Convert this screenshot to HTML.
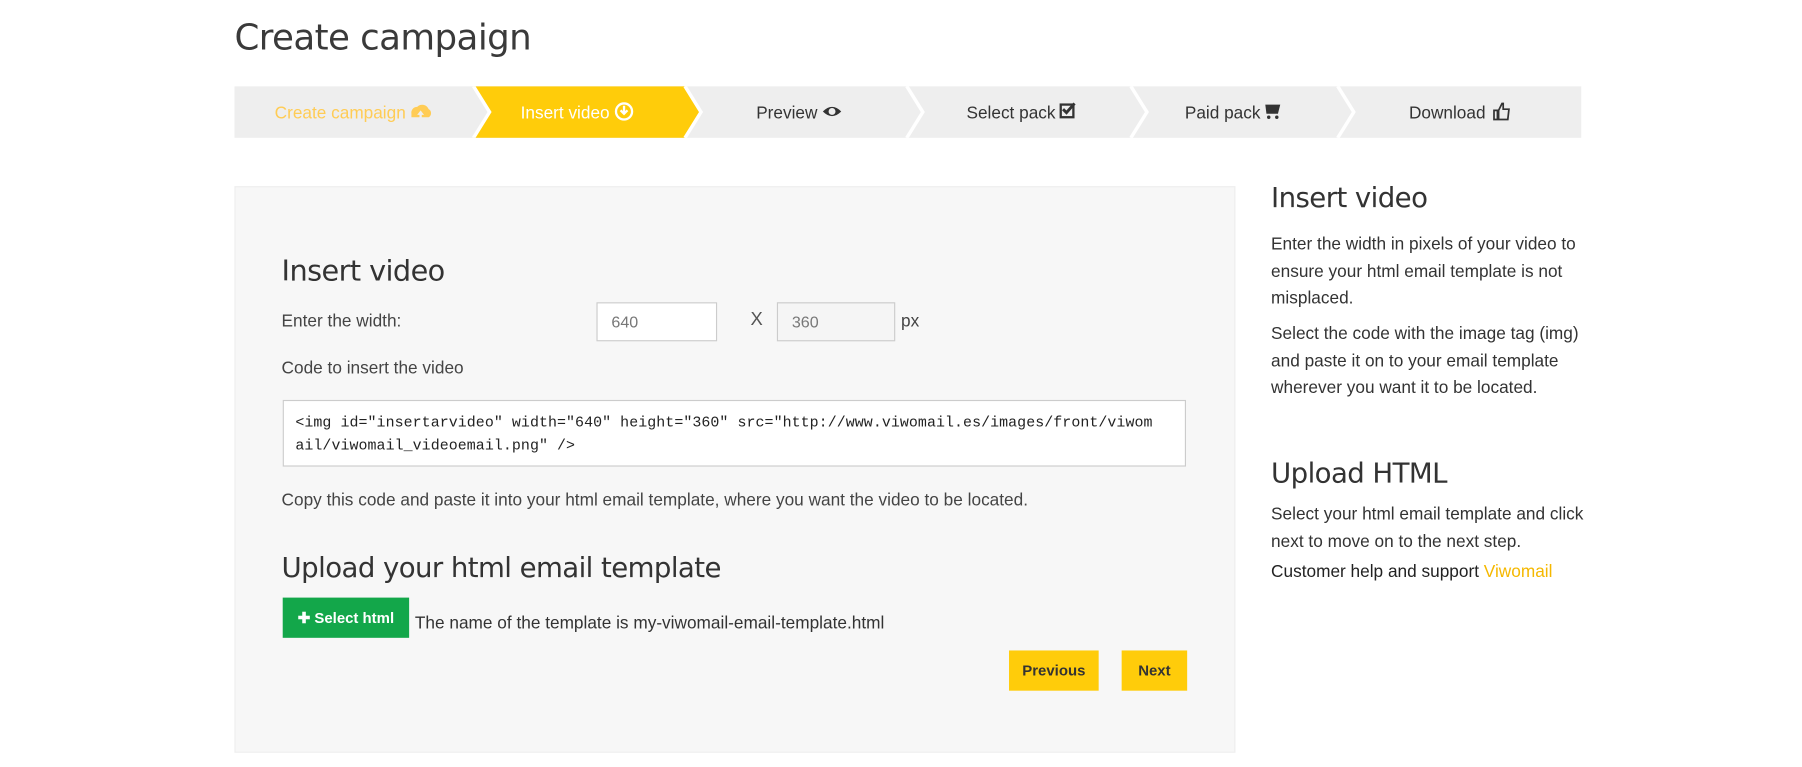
<!DOCTYPE html>
<html><head><meta charset="utf-8"><style>
body{margin:0;width:1802px;height:766px;background:#fff;font-family:"Liberation Sans",sans-serif;color:#333;position:relative;overflow:hidden}
#w{position:absolute;left:0;top:0;width:1568px;height:667px;transform:scale(1.14923);transform-origin:0 0}
.a{position:absolute;white-space:nowrap}
h1,h2,h3{margin:0;font-weight:normal;font-family:"DejaVu Sans","Liberation Sans",sans-serif;letter-spacing:-0.5px}
.s{font-size:15px;color:#444}
input{position:absolute;border:1px solid #ccc;background:#fff;font-size:14px;color:#777;padding:0 12px;box-sizing:border-box;height:34px;font-family:"Liberation Sans",sans-serif}
.btn{position:absolute;background:#ffcc0a;color:#333;font-size:13px;font-weight:bold;text-align:center;line-height:35px;height:35px}
</style></head><body><div id="w">
<h1 class="a" style="left:204px;top:15px;font-size:31px;color:#3a3a3a">Create campaign</h1>
<svg class="a" style="left:204px;top:75px" width="1172" height="45">
<rect width="1172" height="45" fill="#eeeeee"/>
<polygon points="208,0 392,0 406,22.5 392,45 208,45 222,22.5" fill="#ffcc0a"/>
<g fill="none" stroke="#fff" stroke-width="3">
<polyline points="208,0 222,22.5 208,45"/>
<polyline points="392,0 406,22.5 392,45"/>
<polyline points="585,0 599,22.5 585,45"/>
<polyline points="780,0 794,22.5 780,45"/>
<polyline points="960,0 974,22.5 960,45"/>
</g>
<g font-family="Liberation Sans" font-size="15">
<text x="35" y="28" fill="#ffcc55">Create campaign</text>
<text x="249" y="28" fill="#fff">Insert video</text>
<text x="454" y="28" fill="#333">Preview</text>
<text x="637" y="28" fill="#333">Select pack</text>
<text x="827" y="28" fill="#333">Paid pack</text>
<text x="1022" y="28" fill="#333">Download</text>
</g>
<path d="M154 24a5 5 0 0 1 5-6 6 6 0 0 1 10 2 4 4 0 0 1 0 7h-15z" fill="#ffcc55"/><path d="M162 21l-3 4h2v5h2v-5h2z" fill="#eee"/>
<circle cx="339" cy="22" r="7" fill="none" stroke="#fff" stroke-width="2"/><path d="M339 17v7M336 21l3 3 3-3" stroke="#fff" stroke-width="2" fill="none"/>
<path d="M512 22q8-8 16 0q-8 8-16 0z" fill="#333"/><circle cx="520" cy="22" r="3" fill="#eee"/>
<rect x="719" y="16" width="11" height="11" fill="none" stroke="#333" stroke-width="2"/><path d="M721 20l3 3 7-8" stroke="#333" stroke-width="2.5" fill="none"/>
<path d="M897 16h13l-2 8h-10z" fill="#333"/><circle cx="900" cy="27" r="1.5" fill="#333"/><circle cx="907" cy="27" r="1.5" fill="#333"/>
<path d="M1096 21h3v8h-3zM1100 21l3-6h1v5h5l-1 9h-8z" fill="none" stroke="#333" stroke-width="1.5"/>
</svg>
<div class="a" style="left:204px;top:162px;width:869px;height:491px;background:#f7f7f7;border:1px solid #eee"></div>
<h2 class="a" style="left:245px;top:221px;font-size:25px;color:#333">Insert video</h2>
<div class="a s" style="left:245px;top:271px">Enter the width:</div>
<input style="left:519px;top:263px;width:105px" value="640">
<div class="a" style="left:653px;top:270px;font-size:16px;color:#555">X</div>
<input style="left:676px;top:263px;width:103px;background:#f5f5f5" value="360">
<div class="a s" style="left:784px;top:271px">px</div>
<div class="a s" style="left:245px;top:312px">Code to insert the video</div>
<div class="a" style="left:246px;top:348px;width:786px;height:58px;box-sizing:border-box;border:1px solid #ccc;background:#fff;font-family:'Liberation Mono',monospace;font-size:13px;line-height:20px;padding:9px 10px;white-space:normal;word-break:break-all;color:#222;letter-spacing:0.05px">&lt;img id="insertarvideo" width="640" height="360" src="http://www.viwomail.es/images/front/viwom<br>ail/viwomail_videoemail.png" /&gt;</div>
<div class="a s" style="left:245px;top:427px">Copy this code and paste it into your html email template, where you want the video to be located.</div>
<h2 class="a" style="left:245px;top:480px;font-size:24px;color:#333">Upload your html email template</h2>
<div class="a" style="left:246px;top:520px;width:110px;height:35px;background:#13a74a;color:#fff;font-size:13px;font-weight:bold;line-height:35px;text-align:center">✚ Select html</div>
<div class="a s" style="left:361px;top:534px;color:#333">The name of the template is my-viwomail-email-template.html</div>
<div class="btn" style="left:878px;top:566px;width:78px">Previous</div>
<div class="btn" style="left:976px;top:566px;width:57px">Next</div>
<h3 class="a" style="left:1106px;top:158px;font-size:24px;color:#333">Insert video</h3>
<div class="a s" style="left:1106px;top:201px;line-height:23.5px;color:#333">Enter the width in pixels of your video to<br>ensure your html email template is not<br>misplaced.</div>
<div class="a s" style="left:1106px;top:279px;line-height:23.5px;color:#333">Select the code with the image tag (img)<br>and paste it on to your email template<br>wherever you want it to be located.</div>
<h3 class="a" style="left:1106px;top:398px;font-size:24px;color:#333">Upload HTML</h3>
<div class="a s" style="left:1106px;top:436px;line-height:23.5px;color:#333">Select your html email template and click<br>next to move on to the next step.</div>
<div class="a" style="left:1106px;top:489px;font-size:15px;color:#222">Customer help and support <span style="color:#f5b800">Viwomail</span></div>
</div></body></html>
